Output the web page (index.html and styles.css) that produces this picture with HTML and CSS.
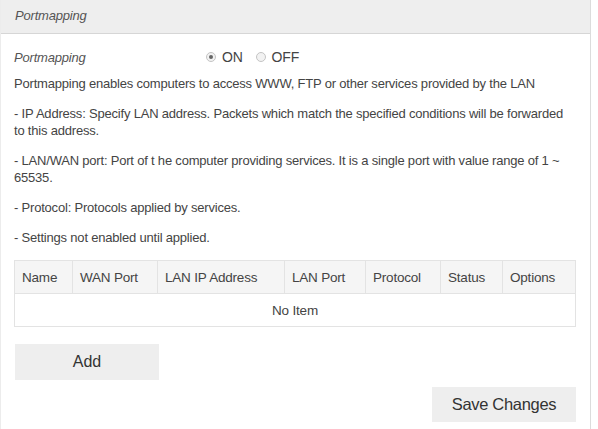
FILE: index.html
```html
<!DOCTYPE html>
<html>
<head>
<meta charset="utf-8">
<link rel="stylesheet" href="styles.css">
</head>
<body>
<div class="panel">
  <div class="panel-head">Portmapping</div>
  <div class="panel-body">
    <div class="toggle-row">
      <span class="toggle-label">Portmapping</span>
      <label class="radio"><span class="dot on"></span>ON</label>
      <label class="radio"><span class="dot"></span>OFF</label>
    </div>
    <p class="intro">Portmapping enables computers to access WWW, FTP or other services provided by the LAN</p>
    <p class="note">- IP Address: Specify LAN address. Packets which match the specified conditions will be forwarded to this address.</p>
    <p class="note">- LAN/WAN port: Port of t he computer providing services. It is a single port with value range of 1 ~ 65535.</p>
    <p class="note">- Protocol: Protocols applied by services.</p>
    <p class="note">- Settings not enabled until applied.</p>
    <table class="grid">
      <colgroup>
        <col class="c1"><col class="c2"><col class="c3"><col class="c4"><col class="c5"><col class="c6"><col class="c7">
      </colgroup>
      <thead>
        <tr><th>Name</th><th>WAN Port</th><th>LAN IP Address</th><th>LAN Port</th><th>Protocol</th><th>Status</th><th>Options</th></tr>
      </thead>
      <tbody>
        <tr><td colspan="7" class="empty">No Item</td></tr>
      </tbody>
    </table>
    <div class="add-row"><button class="btn btn-add">Add</button></div>
    <div class="save-row"><button class="btn btn-save">Save Changes</button></div>
  </div>
</div>
</body>
</html>
```
FILE: styles.css
```css
html, body {
  margin: 0;
  padding: 0;
  background: #fff;
}
body {
  font-family: "Liberation Sans", Arial, sans-serif;
  font-size: 13px;
  letter-spacing: -0.2px;
  color: #444;
}
.panel {
  width: 589px;
  border-left: 1px solid #ececec;
  border-right: 1px solid #dcdcdc;
  height: 429px;
}
.panel-head {
  height: 33px;
  line-height: 31px;
  background: #eeeeee;
  border-bottom: 1px solid #d6d6d6;
  padding-left: 14px;
  font-style: italic;
  color: #555;
}
.panel-body {
  padding: 0 14px 0 13px;
}
.toggle-row {
  display: flex;
  align-items: center;
  height: 20px;
  margin-top: 13px;
}
.toggle-label {
  width: 192px;
  font-style: italic;
  color: #555;
}
.radio {
  display: flex;
  align-items: center;
  font-size: 14px;
  color: #444;
  margin-right: 13px;
}
.dot {
  width: 8px;
  height: 8px;
  border: 1px solid #c4c4c4;
  border-radius: 50%;
  background: #f2f2f2;
  margin-right: 6px;
  position: relative;
}
.dot.on::after {
  content: "";
  position: absolute;
  left: 2px;
  top: 2px;
  width: 4px;
  height: 4px;
  border-radius: 50%;
  background: #666;
}
p {
  margin: 0;
  line-height: 17px;
}
.intro {
  margin-top: 8px;
}
.note {
  margin-top: 13px;
}
.grid {
  margin-top: 14px;
  width: 561px;
  border-collapse: collapse;
  table-layout: fixed;
}
.c1 { width: 58px; }
.c2 { width: 85px; }
.c3 { width: 127px; }
.c4 { width: 81px; }
.c5 { width: 75px; }
.c6 { width: 62px; }
.c7 { width: 73px; }
.grid th {
  background: #f5f5f5;
  font-weight: normal;
  text-align: left;
  height: 32px;
  padding: 0 0 0 7px;
  border: 1px solid #e3e3e3;
  font-size: 13.5px;
  color: #444;
}
.grid td {
  height: 32px;
  border: 1px solid #e3e3e3;
  padding: 0;
  font-size: 13.5px;
}
.grid td.empty {
  text-align: center;
  color: #444;
}
.add-row {
  margin-top: 17px;
}
.btn {
  border: none;
  background: #eeeeee;
  color: #333;
  font-family: "Liberation Sans", Arial, sans-serif;
  font-size: 16px;
  padding: 0;
}
.btn-add {
  width: 144px;
  height: 36px;
  margin-left: 1px;
}
.save-row {
  display: flex;
  justify-content: flex-end;
  margin-top: 7px;
}
.btn-save {
  width: 144px;
  height: 35px;
  font-size: 16.5px;
  letter-spacing: -0.3px;
}
```
